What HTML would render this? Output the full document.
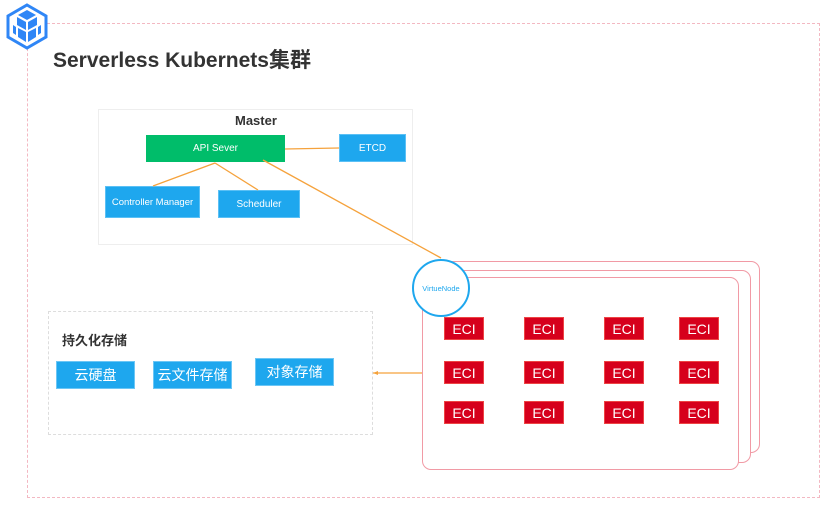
<!DOCTYPE html>
<html><head><meta charset="utf-8"><style>
body{margin:0;width:830px;height:508px;background:#fff;position:relative;overflow:hidden;font-family:"Liberation Sans","Noto Sans CJK SC",sans-serif}
.a{position:absolute;box-sizing:border-box}
.b{background:#1ea7ee;color:#fff;display:flex;align-items:center;justify-content:center;font-size:10px;border:1px solid #5bc0f5}
.c{background:#00bd6a;color:#fff;display:flex;align-items:center;justify-content:center;font-size:10px}
.e{background:#d6001c;color:#fff;width:40px;height:23px;display:flex;align-items:center;justify-content:center;font-size:14px;border:1px solid #e44}
.s{background:#1ea7ee;color:#fff;display:flex;align-items:center;justify-content:center;font-size:14px;border:1px solid #6cc6f5}
</style></head><body>
<div class="a" style="left:27px;top:23px;width:793px;height:475px;border:1px dashed #f3b8c2"></div>
<svg class="a" style="left:4px;top:3px" width="46" height="47" viewBox="0 0 46 47">
<polygon points="23,2 42,13 42,34 23,45 4,34 4,13" fill="#fff" stroke="#2f86f6" stroke-width="3"/>
<g fill="#2f86f6"><polygon points="23,7 32,12 23,17 14,12"/><polygon points="13,14 22,19 22,27 13,22"/><polygon points="33,14 24,19 24,27 33,22"/><polygon points="9,22 12,24 12,32 9,30"/><polygon points="37,22 34,24 34,32 37,30"/><polygon points="14,25 22,29 22,39 14,34"/><polygon points="32,25 24,29 24,39 32,34"/></g></svg>
<div class="a" style="left:53px;top:44px;font-size:21px;font-weight:bold;color:#333;white-space:nowrap">Serverless Kubernets集群</div>
<div class="a" style="left:98px;top:109px;width:315px;height:136px;border:1px solid #eee"></div>
<div class="a" style="left:235px;top:113px;font-size:13px;font-weight:bold;color:#333">Master</div>
<div class="a c" style="left:146px;top:135px;width:139px;height:27px">API Sever</div>
<div class="a b" style="left:339px;top:134px;width:67px;height:28px">ETCD</div>
<div class="a b" style="left:105px;top:186px;width:95px;height:32px;font-size:9.5px">Controller Manager</div>
<div class="a b" style="left:218px;top:190px;width:82px;height:28px">Scheduler</div>
<div class="a" style="left:48px;top:311px;width:325px;height:124px;border:1px dashed #ddd"></div>
<div class="a" style="left:62px;top:330px;font-size:13px;font-weight:bold;color:#333">持久化存储</div>
<div class="a s" style="left:56px;top:361px;width:79px;height:28px">云硬盘</div>
<div class="a s" style="left:153px;top:361px;width:79px;height:28px">云文件存储</div>
<div class="a s" style="left:255px;top:358px;width:79px;height:28px">对象存储</div>
<div class="a" style="left:445px;top:261px;width:315px;height:192px;border:1px solid #f19aa5;border-radius:9px;background:#fff"></div>
<div class="a" style="left:435px;top:270px;width:316px;height:193px;border:1px solid #f19aa5;border-radius:9px;background:#fff"></div>
<div class="a" style="left:422px;top:277px;width:317px;height:193px;border:1px solid #f19aa5;border-radius:9px;background:#fff"></div>
<svg class="a" style="left:0;top:0" width="830" height="508"><g stroke="#f5a23c" stroke-width="1.3" fill="none">
<line x1="285" y1="149" x2="339" y2="148"/><line x1="215" y1="163" x2="153" y2="186"/><line x1="215" y1="163" x2="258" y2="190"/>
<line x1="263" y1="160" x2="441" y2="258"/><line x1="373" y1="373" x2="422" y2="373"/></g>
<polygon points="373,373 378,371 378,375" fill="#f5a23c"/></svg>
<div class="a" style="left:412px;top:259px;width:58px;height:58px;border:2px solid #1ea7ee;border-radius:50%;background:#fff;display:flex;align-items:center;justify-content:center;font-size:7.5px;color:#1ea7ee">VirtueNode</div>
<div class="a e" style="left:444px;top:317px">ECI</div><div class="a e" style="left:524px;top:317px">ECI</div><div class="a e" style="left:604px;top:317px">ECI</div><div class="a e" style="left:679px;top:317px">ECI</div>
<div class="a e" style="left:444px;top:361px">ECI</div><div class="a e" style="left:524px;top:361px">ECI</div><div class="a e" style="left:604px;top:361px">ECI</div><div class="a e" style="left:679px;top:361px">ECI</div>
<div class="a e" style="left:444px;top:401px">ECI</div><div class="a e" style="left:524px;top:401px">ECI</div><div class="a e" style="left:604px;top:401px">ECI</div><div class="a e" style="left:679px;top:401px">ECI</div>
</body></html>
